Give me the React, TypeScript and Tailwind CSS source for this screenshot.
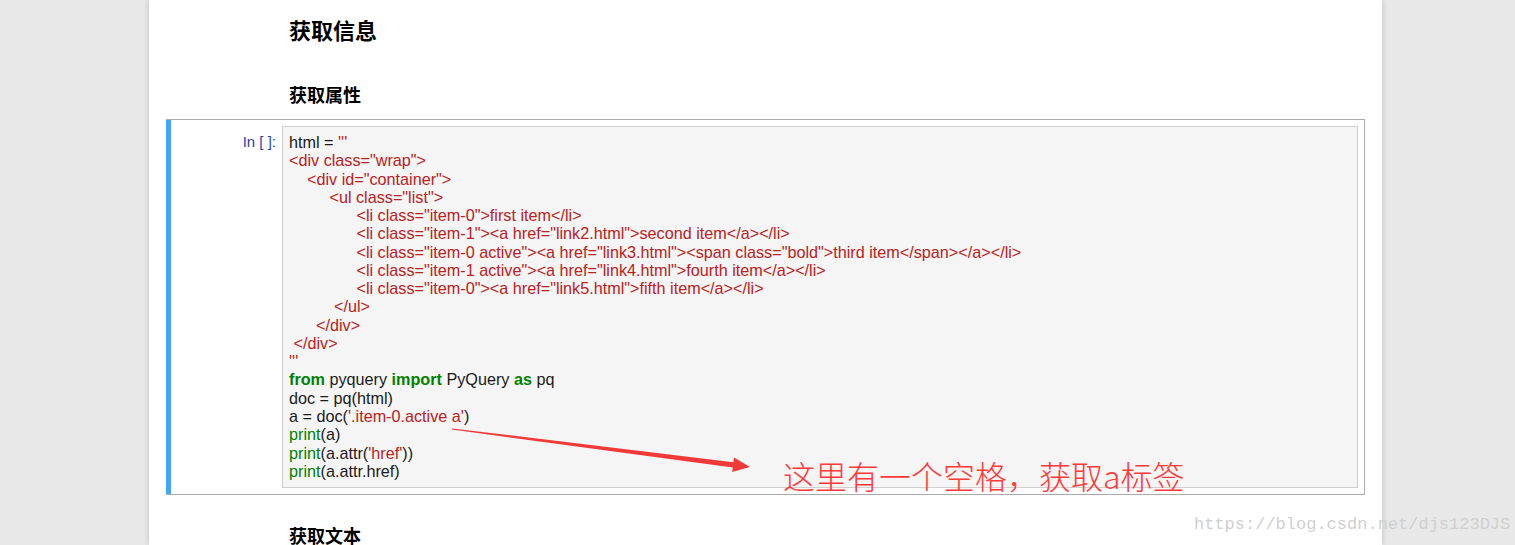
import React from "react";

const S = "text-[#ba2121]";
const K = "text-[#008000] font-semibold";
const B = "text-[#008000]";

type Seg = [string, string?];

const lines: Seg[][] = [
  [["html = "], ["'''", S]],
  [['<div class="wrap">', S]],
  [['    <div id="container">', S]],
  [['         <ul class="list">', S]],
  [['               <li class="item-0">first item</li>', S]],
  [['               <li class="item-1"><a href="link2.html">second item</a></li>', S]],
  [['               <li class="item-0 active"><a href="link3.html"><span class="bold">third item</span></a></li>', S]],
  [['               <li class="item-1 active"><a href="link4.html">fourth item</a></li>', S]],
  [['               <li class="item-0"><a href="link5.html">fifth item</a></li>', S]],
  [['          </ul>', S]],
  [['      </div>', S]],
  [[' </div>', S]],
  [["'''", S]],
  [["from", K], [" pyquery "], ["import", K], [" PyQuery "], ["as", K], [" pq"]],
  [["doc = pq(html)"]],
  [["a = doc("], ["'.item-0.active a'", S], [")"]],
  [["print", B], ["(a)"]],
  [["print", B], ["(a.attr("], ["'href'", S], ["))"]],
  [["print", B], ["(a.attr.href)"]],
];

function Arrow() {
  // tapered red annotation arrow drawn over the screenshot
  return (
    <svg
      className="absolute left-0 top-0 pointer-events-none"
      width={1515}
      height={545}
      viewBox="0 0 1515 545"
    >
      <polygon
        points="452.1,428.4 733.4,462.2 734,457.6 750,467 732.2,472 732.8,467.4 451.9,429.6"
        fill="#f03a3a"
      />
    </svg>
  );
}

export default function App() {
  return (
    <div className="relative flex h-[545px] w-[1515px] overflow-hidden bg-[#e8e8e8]">
      <div className="ml-[149px] w-[1233px] shrink-0 bg-white shadow-[0_0_6px_rgba(0,0,0,0.18)]">
        <h1 className="pl-[140px] pt-[15px] text-[22px] leading-[28px] font-bold text-black [font-family:'Noto_Sans_CJK_SC',sans-serif]">
          获取信息
        </h1>
        <h2 className="pl-[140px] pt-[39px] text-[18px] leading-[24px] font-bold text-black [font-family:'Noto_Sans_CJK_SC',sans-serif]">
          获取属性
        </h2>

        {/* code cell */}
        <div className="ml-[17px] mt-[13px] flex w-[1199px] border border-[#ababab] border-l-0">
          <div className="w-[5px] shrink-0 bg-[#42a5f5]" />
          <div className="flex flex-1 py-[6px] pr-[6px]">
            <div className="w-[111px] shrink-0 pr-[6px] pt-[7px] text-right text-[15px] leading-[18px] text-[#303f9f] [font-family:'Liberation_Sans',Arial,sans-serif]">
              In [ ]:
            </div>
            <div className="flex-1 border border-[#cfcfcf] bg-[#f5f5f5] px-[6px] pt-[6px] pb-[7px] text-[16.2px] leading-[18.28px] text-[#1a1a1a] [font-family:'Liberation_Sans',Arial,sans-serif]">
              {lines.map((ln, i) => (
                <div key={i} className="whitespace-pre h-[18.28px]">
                  {ln.map(([t, c], j) => (
                    <span key={j} className={c}>
                      {t}
                    </span>
                  ))}
                </div>
              ))}
            </div>
          </div>
        </div>

        <h2 className="pl-[140px] pt-[28px] text-[18px] leading-[24px] font-bold text-black [font-family:'Noto_Sans_CJK_SC',sans-serif]">
          获取文本
        </h2>
      </div>

      <Arrow />

      <div className="absolute left-[783px] top-[455px] text-[32px] leading-[40px] font-light text-[#ff3a3a] [font-family:'Noto_Sans_CJK_SC',sans-serif]">
        这里有一个空格，获取a标签
      </div>

      <div className="absolute left-[1194px] top-[514px] text-[17px] leading-[22px] text-[#d0d0d0] [font-family:'Liberation_Mono','Courier_New',monospace]">
        https://blog.csdn.net/djs123DJS
      </div>
    </div>
  );
}
